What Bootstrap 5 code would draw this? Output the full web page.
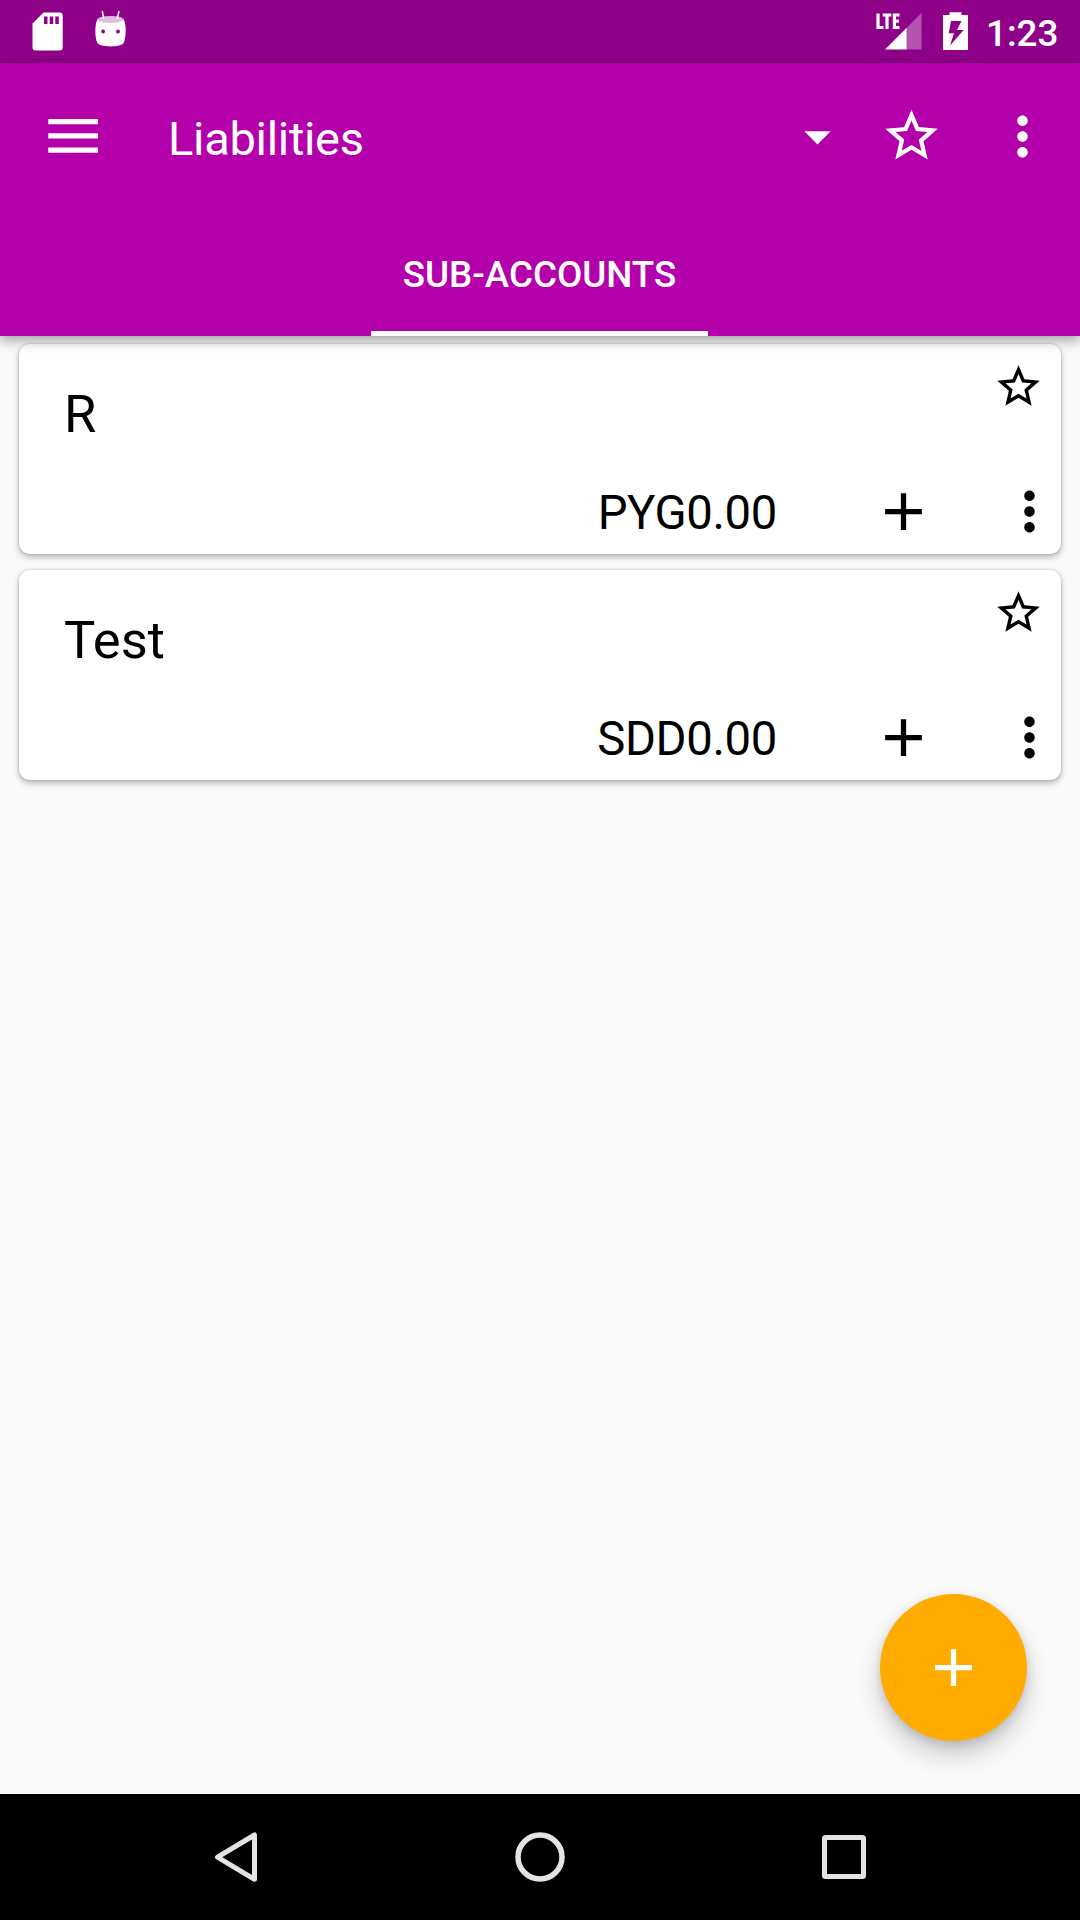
<!DOCTYPE html>
<html lang="en">
<head>
<meta charset="utf-8">
<meta name="viewport" content="width=device-width, initial-scale=1">
<title>Liabilities</title>
<link href="https://cdn.jsdelivr.net/npm/bootstrap@5.3.0/dist/css/bootstrap.min.css" rel="stylesheet">
<style>
  body { font-family: Roboto, "Liberation Sans", sans-serif; background: #fafafa; color: #000; width: 1080px; height: 1920px; line-height: 1; }
  svg { display: block; flex: none; }
  .status-strip { height: 63px; background: #8f0089; }
  .clock { width: 94px; font-size: 36.75px; font-weight: 500; margin-left: 18px; padding-top: 6px; }
  .app-head { background: #b300ab; box-shadow: 0 4px 12px rgba(0,0,0,.38); z-index: 2; }
  .app-bar { height: 147px; padding: 0 26px 1px 42px; }
  .app-title { font-size: 47px; font-weight: 400; letter-spacing: -.3px; margin: 0 auto 0 63px; padding-top: 7px; }
  .caret-btn { margin-right: 31px; }
  .plain { border: 0; padding: 0; background: none; color: inherit; display: block; }
  .tab-bar { height: 126px; padding-right: 1px; }
  .tab-item { width: 337px; height: 126px; border-bottom: 5px solid #fff; font-size: 36.75px; font-weight: 500; color: #fff; padding-top: 10px; }
  .account-list { padding: 8px 19px 0; gap: 16px; }
  .account { height: 210px; border: 0; border-radius: 11px; color: #000; box-shadow: 0 3px 6px rgba(0,0,0,.28), 0 0 3px rgba(0,0,0,.2); }
  .account-name { font-size: 52.5px; font-weight: 400; margin: 0; padding: 39px 0 0 45px; }
  .account-top { padding-right: 17px; }
  .account-top svg { margin-top: 16.5px; }
  .account-foot { padding: 0 0 11px; }
  .amount { font-size: 47.25px; letter-spacing: -.35px; padding-top: 4px; margin-right: 95px; }
  .add-icon { margin-right: 63px; }
  .fab { right: 53px; bottom: 53px; width: 147px; height: 147px; background: #ffab00; color: #fff; box-shadow: 0 14px 24px rgba(0,0,0,.2), 0 3px 10px rgba(0,0,0,.12); }
  .sys-nav { height: 126px; background: #000; padding: 0 206px; }
</style>
</head>
<body class="d-flex flex-column overflow-hidden">
<svg width="0" height="0" class="position-absolute" aria-hidden="true">
  <symbol id="star" viewBox="0 0 24 24"><path fill="currentColor" d="M22 9.24l-7.19-.62L12 2 9.19 8.63 2 9.24l5.46 4.73L5.82 21 12 17.27 18.18 21l-1.63-7.03L22 9.24zM12 15.4l-3.76 2.27 1-4.28-3.32-2.88 4.38-.38L12 6.1l1.71 4.04 4.38.38-3.32 2.88 1 4.28L12 15.4z"/></symbol>
  <symbol id="dots" viewBox="0 0 24 24"><path fill="currentColor" d="M12 8c1.1 0 2-.9 2-2s-.9-2-2-2-2 .9-2 2 .9 2 2 2zm0 2c-1.1 0-2 .9-2 2s.9 2 2 2 2-.9 2-2-.9-2-2-2zm0 6c-1.1 0-2 .9-2 2s.9 2 2 2 2-.9 2-2-.9-2-2-2z"/></symbol>
  <symbol id="plus" viewBox="0 0 24 24"><path fill="currentColor" d="M19 13h-6v6h-2v-6H5v-2h6V5h2v6h6v2z"/></symbol>
</svg>

<div class="status-strip d-flex align-items-center text-white">
  <svg width="140" height="63" viewBox="0 0 140 63">
    <path fill="#fff" fill-rule="evenodd" d="M43.500 12.500H59.500a3.200 3.200 0 0 1 3.200 3.200V47.300a3.200 3.200 0 0 1-3.200 3.200H35.700a3.200 3.200 0 0 1-3.200-3.200V23.500zM44 16.500v7.500h3.500v-7.500zM49.700 16.500v7.500h3.500v-7.500zM55.300 16.500v7.500h3.500v-7.500z"/>
    <path stroke="#fff" stroke-width="1.500" d="M102.200 11l1.700 8M119 11l-1.700 8"/>
    <ellipse cx="110.500" cy="19.700" rx="13.300" ry="3.700" fill="#fff" fill-opacity=".73"/>
    <path fill="#fff" fill-rule="evenodd" d="M97.300 19.500C101 24 120 24 123.800 19.500C126.400 25 126.300 37 123.700 43C121 47.500 100 47.500 97.300 43C94.700 37 94.700 25 97.300 19.500zM101.200 31.500a1.900 1.900 0 1 0 3.800 0a1.900 1.900 0 1 0-3.800 0zM116.100 31.500a1.900 1.900 0 1 0 3.800 0a1.900 1.900 0 1 0-3.800 0z"/>
  </svg>
  <svg class="ms-auto" width="98" height="63" viewBox="870 0 98 63">
    <path fill="#fff" fill-opacity=".32" d="M906.700 27.800L921.500 13V49.500H906.700z"/>
    <path fill="#fff" d="M885 49.500L906.700 27.800V49.500z"/>
    <path fill="none" stroke="#fff" stroke-width="3.200" d="M878 13.500V27.500H883.500M882.700 15H891.300M887 15V29M899.500 15H894.400V27.500H899.500M894.400 21.200H898.800"/>
    <path fill="#fff" fill-rule="evenodd" d="M949.500 12.200H961.500V15H968V50H943V15H949.500zM951 21L948.700 33.300H954L950 45.500L963.700 30H957L961.500 21z"/>
  </svg>
  <div class="clock">1:23</div>
</div>

<header class="app-head position-relative text-white">
  <div class="app-bar d-flex align-items-center">
    <button class="plain" aria-label="Menu"><svg width="63" height="63" viewBox="0 0 24 24"><path fill="currentColor" d="M2.400 18.200h18.900v-2H2.400zm0-5.400h18.900v-2H2.400zm0-7.500v2h18.900v-2z"/></svg></button>
    <h1 class="app-title">Liabilities</h1>
    <button class="plain caret-btn" aria-label="Choose account"><svg width="63" height="63" viewBox="0 0 24 24"><path fill="currentColor" d="M7 10l5 5 5-5z"/></svg></button>
    <button class="plain" aria-label="Favorite"><svg width="63" height="63" viewBox="0 .2 24 24"><use href="#star" width="24" height="24"/></svg></button>
    <button class="plain ms-5" aria-label="More"><svg width="63" height="63"><use href="#dots"/></svg></button>
  </div>
  <nav class="tab-bar d-flex justify-content-center"><a class="tab-item d-flex align-items-center justify-content-center text-decoration-none" href="#">SUB-ACCOUNTS</a></nav>
</header>

<main class="flex-grow-1 position-relative">
  <div class="account-list d-flex flex-column">
    <div class="account card justify-content-between">
      <div class="account-top d-flex justify-content-between align-items-start"><h2 class="account-name">R</h2><svg width="51" height="51"><use href="#star"/></svg></div>
      <div class="account-foot d-flex align-items-center justify-content-end"><span class="amount">PYG0.00</span><svg class="add-icon" width="63" height="63"><use href="#plus"/></svg><svg width="63" height="63"><use href="#dots"/></svg></div>
    </div>
    <div class="account card justify-content-between">
      <div class="account-top d-flex justify-content-between align-items-start"><h2 class="account-name">Test</h2><svg width="51" height="51"><use href="#star"/></svg></div>
      <div class="account-foot d-flex align-items-center justify-content-end"><span class="amount">SDD0.00</span><svg class="add-icon" width="63" height="63"><use href="#plus"/></svg><svg width="63" height="63"><use href="#dots"/></svg></div>
    </div>
  </div>
  <button class="fab plain rounded-circle position-absolute d-flex align-items-center justify-content-center" aria-label="Add"><svg width="63" height="63"><use href="#plus"/></svg></button>
</main>

<footer class="sys-nav d-flex align-items-center justify-content-between">
  <svg width="60" height="60" viewBox="206 1827 60 60"><path fill="none" stroke="#e4e4e4" stroke-width="5" stroke-linejoin="round" d="M254.500 1835V1879.300L217.500 1857.200z"/></svg>
  <svg width="60" height="60" viewBox="510 1827 60 60"><circle cx="540" cy="1857" r="22" fill="none" stroke="#e4e4e4" stroke-width="5.500"/></svg>
  <svg width="60" height="60" viewBox="814 1827 60 60"><rect x="824.500" y="1837.500" width="39" height="39" rx="1" fill="none" stroke="#e4e4e4" stroke-width="5"/></svg>
</footer>
<script src="https://cdn.jsdelivr.net/npm/bootstrap@5.3.0/dist/js/bootstrap.bundle.min.js"></script>
</body>
</html>
